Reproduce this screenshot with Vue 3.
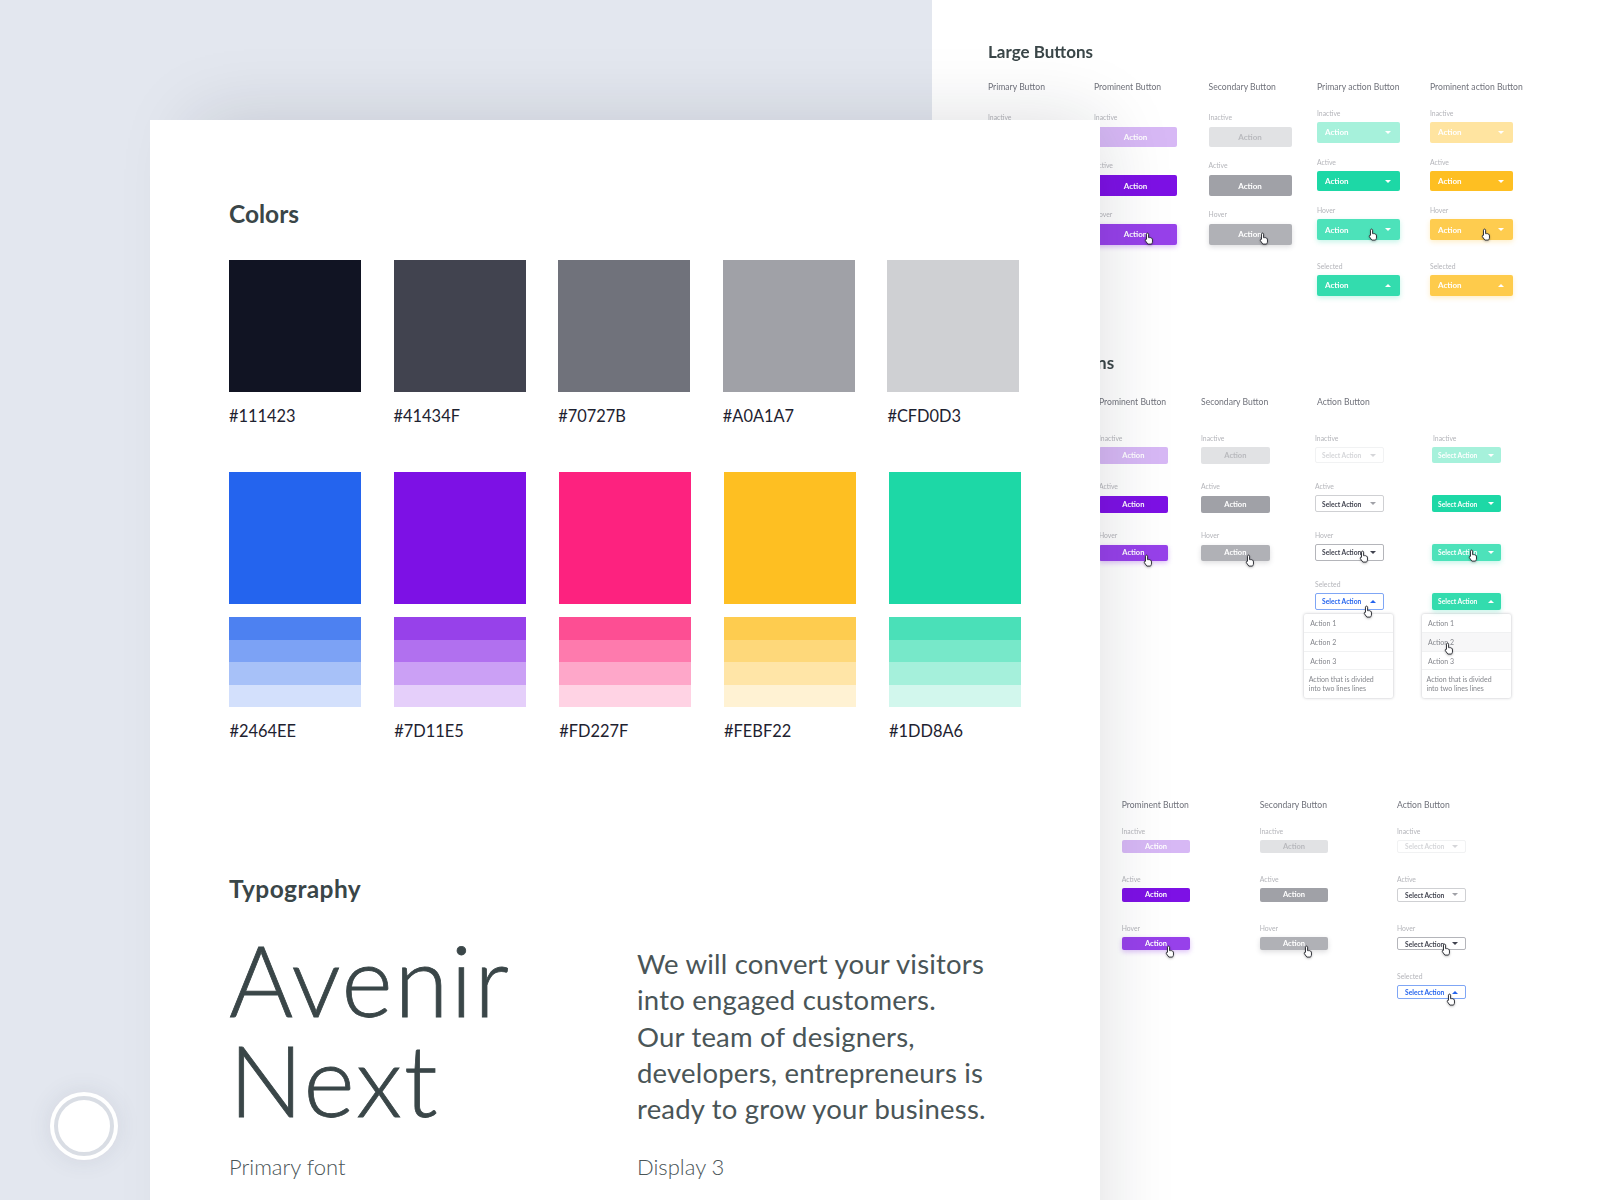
<script setup>
const greys = ['#111423', '#41434F', '#70727B', '#A0A1A7', '#CFD0D3']
const families = [
  { hex: '#2464EE', tints: ['#4D81F1', '#7CA2F5', '#A7C1F8', '#D3E0FC'] },
  { hex: '#7D11E5', tints: ['#9741EA', '#B170EF', '#CBA0F5', '#E5CFFA'] },
  { hex: '#FD227F', tints: ['#FD4E93', '#FE7AAD', '#FEA7C9', '#FFD3E4'] },
  { hex: '#FEBF22', tints: ['#FECC4F', '#FED87A', '#FFE5A7', '#FFF2D3'] },
  { hex: '#1DD8A6', tints: ['#4AE0B8', '#77E8C9', '#A5F0DB', '#D2F7ED'] }
]
const handPath = 'M4.2 1c.8 0 1.3.6 1.3 1.3v4.2c.5-.4 1.2-.3 1.5.2.5-.4 1.3-.2 1.5.4.6-.3 1.4.1 1.5.8l.2 2.6c.1 1.2-.2 2.2-.9 3.2l-.3.5H4.6l-2.9-4c-.4-.6-.3-1.3.2-1.7.4-.3 1-.3 1.1 0V2.3C3 1.6 3.5 1 4.2 1z'
const plain = (tone) => [
  { label: 'Inactive', cls: `${tone} inactive`, text: 'Action' },
  { label: 'Active', cls: `${tone} active`, text: 'Action' },
  { label: 'Hover', cls: `${tone} hover`, text: 'Action', hand: 'on-plain' }
]
const drop = (tone, text, labels = true) => [
  { label: 'Inactive', cls: `${tone} inactive`, text, arrow: 'down' },
  { label: labels ? 'Active' : '', cls: `${tone} active`, text, arrow: 'down' },
  { label: labels ? 'Hover' : '', cls: `${tone} hover`, text, arrow: 'down', hand: 'on-drop' },
  { label: labels ? 'Selected' : '', cls: `${tone} selected`, text, arrow: 'up', extra: true }
]
const menuItems = ['Action 1', 'Action 2', 'Action 3']
const sections = [
  {
    key: 'lg', title: 'Large Buttons',
    columns: [
      { head: 'Primary Button', states: [{ label: 'Inactive' }] },
      { head: 'Prominent Button', states: plain('purple') },
      { head: 'Secondary Button', states: plain('grey') },
      { head: 'Primary action Button', act: true, states: drop('green', 'Action') },
      { head: 'Prominent action Button', act: true, states: drop('yellow', 'Action') }
    ]
  },
  {
    key: 'md', title: 'Medium Buttons',
    columns: [
      { states: [] },
      { head: 'Prominent Button', states: plain('purple') },
      { head: 'Secondary Button', states: plain('grey') },
      { head: 'Action Button', act: true, menu: 'plain', states: drop('outline', 'Select Action') },
      { head: '', act: true, menu: 'hot', states: drop('green', 'Select Action', false) }
    ]
  },
  {
    key: 'sm', title: '',
    columns: [
      { states: [] },
      { head: 'Prominent Button', states: plain('purple') },
      { head: 'Secondary Button', states: plain('grey') },
      { head: 'Action Button', act: true, states: drop('outline', 'Select Action') }
    ]
  }
]
</script>

<template>
  <div class="canvas">
    <section class="sheet">
      <div v-for="s in sections" :key="s.key" class="group" :class="s.key">
        <h3 class="group-title">{{ s.title }}&nbsp;</h3>
        <div class="cols">
          <div v-for="(c, ci) in s.columns" :key="ci" class="col" :class="{ act: c.act }">
            <div class="col-head">{{ c.head }}&nbsp;</div>
            <div class="states">
              <div v-for="st in c.states" :key="st.label + st.cls" class="state" :class="{ extra: st.extra }">
                <div class="state-label">{{ st.label }}&nbsp;</div>
                <div v-if="st.cls" class="btn" :class="st.cls">
                  <span class="btn-text">{{ st.text }}</span>
                  <i v-if="st.arrow" class="arrow" :class="st.arrow"></i>
                  <svg v-if="st.hand || (st.extra && c.menu === 'plain') || (st.extra && s.key === 'sm')" class="hand" :class="st.hand || 'on-sel'" viewBox="0 0 12 15">
                    <path :d="handPath" fill="#fff" stroke="#23252c" stroke-width="1.1" stroke-linejoin="round" />
                  </svg>
                </div>
                <div v-if="st.extra && c.menu" class="menu" :class="c.menu">
                  <div v-for="(m, mi) in menuItems" :key="m" class="menu-row" :class="{ lit: c.menu === 'hot' && mi === 1 }">
                    {{ m }}
                    <svg v-if="c.menu === 'hot' && mi === 1" class="hand on-menu" viewBox="0 0 12 15">
                      <path :d="handPath" fill="#fff" stroke="#23252c" stroke-width="1.1" stroke-linejoin="round" />
                    </svg>
                  </div>
                  <div class="menu-row long">Action that is divided<br />into two lines lines</div>
                </div>
              </div>
            </div>
          </div>
        </div>
      </div>
    </section>

    <div class="card-shadow"></div>

    <main class="card">
      <h2 class="heading colors-heading">Colors</h2>
      <div class="swatches first">
        <div v-for="g in greys" :key="g" class="swatch">
          <div class="tile" :style="{ background: g }"></div>
          <div class="hex">{{ g }}</div>
        </div>
      </div>
      <div class="swatches second">
        <div v-for="f in families" :key="f.hex" class="swatch">
          <div class="tile" :style="{ background: f.hex }"></div>
          <div class="tints">
            <div v-for="t in f.tints" :key="t" class="tint" :style="{ background: t }"></div>
          </div>
          <div class="hex">{{ f.hex }}</div>
        </div>
      </div>

      <h2 class="heading type-heading">Typography</h2>
      <div class="type-grid">
        <div class="type-col">
          <div class="display">Avenir<br />Next</div>
          <div class="caption">Primary font</div>
        </div>
        <div class="type-col">
          <p class="copy">We will convert your visitors<br />into engaged customers.<br />Our team of designers,<br />developers, entrepreneurs is<br />ready to grow your business.</p>
          <div class="caption">Display 3</div>
        </div>
      </div>
    </main>

    <div class="record"><div class="record-inner"></div></div>
  </div>
</template>

<style>
html, body { margin: 0; background: #E3E7EF; }
</style>

<style scoped>
.canvas {
  position: relative;
  width: 1600px;
  height: 1200px;
  overflow: hidden;
  background: #E3E7EF;
  font-family: Lato, "Open Sans", sans-serif;
}

/* artboards on the free canvas */
.sheet {
  position: absolute;
  left: 932px;
  top: 0;
  width: 668px;
  height: 1200px;
  box-sizing: border-box;
  padding: 42px 0 0 56px;
  background: #fff;
  filter: blur(.35px);
}
.card-shadow {
  position: absolute;
  left: 195px;
  top: 120px;
  width: 905px;
  height: 1200px;
  box-shadow: 0 0 70px rgba(20, 25, 40, .15);
}
.card {
  position: absolute;
  left: 150px;
  top: 120px;
  width: 950px;
  height: 1080px;
  box-sizing: border-box;
  padding: 79px 0 0 79px;
  background: #fff;
  color: #3A4648;
}

/* left card */
.heading {
  margin: 0;
  font-size: 24.5px;
  line-height: 30px;
  font-weight: 700;
  letter-spacing: .4px;
  color: #3A4648;
}
.colors-heading { letter-spacing: 0; }
.swatches {
  display: grid;
  grid-template-columns: repeat(5, 132px);
}
.swatches.first { margin-top: 31px; column-gap: 32.6px; }
.swatches.second { margin-top: 44px; column-gap: 32.9px; margin-left: .4px; }
.tile { height: 132px; }
.tints { margin-top: 13px; display: flex; flex-direction: column; }
.tint { height: 22.5px; }
.hex {
  margin-top: 12px;
  font-size: 16.4px;
  line-height: 24px;
  color: #1E2230;
}
.type-heading { margin-top: 131px; }
.type-grid {
  display: grid;
  grid-template-columns: 408px 1fr;
  margin-top: 25px;
}
.display {
  font-size: 98px;
  line-height: 100px;
  font-weight: 300;
  letter-spacing: 2px;
  -webkit-text-stroke: .8px #3A4648;
  color: #3A4648;
}
.copy {
  margin: 17px 0 0;
  font-size: 27.5px;
  line-height: 36.3px;
  font-weight: 400;
  letter-spacing: .2px;
  color: #4A5557;
}
.caption {
  font-size: 22px;
  line-height: 28px;
  font-weight: 300;
  color: #4A5557;
}
.type-col:first-child .caption { margin-top: 24px; }
.type-col:last-child .caption { margin-top: 26px; }

/* record button */
.record {
  position: absolute;
  left: 50px;
  top: 1092px;
  width: 68px;
  height: 68px;
  box-sizing: border-box;
  padding: 4px;
  border-radius: 50%;
  background: #fff;
  box-shadow: 0 0 24px rgba(60, 70, 90, .1);
}
.record-inner {
  box-sizing: border-box;
  width: 100%;
  height: 100%;
  border: 4px solid #D9DDE4;
  border-radius: 50%;
  background: #fff;
}

/* right sheet */
.group-title {
  margin: 0;
  font-size: 17px;
  line-height: 20px;
  font-weight: 700;
  color: #3A4648;
  white-space: nowrap;
}
.cols { display: grid; }
.col-head {
  font-size: 8.6px;
  line-height: 12px;
  color: #70727B;
  white-space: nowrap;
}
.state { position: relative; }
.state-label {
  font-size: 6.8px;
  line-height: 10px;
  color: #B4B5BA;
  white-space: nowrap;
}
.btn {
  position: relative;
  display: flex;
  align-items: center;
  justify-content: center;
  box-sizing: border-box;
  border-radius: 2px;
  font-weight: 700;
  white-space: nowrap;
}
.extra .btn { z-index: 4; }
.act .btn { justify-content: flex-start; }
.arrow {
  position: absolute;
  top: 50%;
  width: 0;
  height: 0;
  margin-top: -1.5px;
  border-left: 3px solid transparent;
  border-right: 3px solid transparent;
}
.arrow.down { border-top: 3px solid currentColor; }
.arrow.up { border-bottom: 3px solid currentColor; }
.hand {
  position: absolute;
  width: 10px;
  height: 13px;
  z-index: 2;
  filter: drop-shadow(0 1px 1px rgba(0, 0, 0, .25));
}

.purple.inactive { background: #D7B8F5; color: #fff; }
.purple.active { background: #7D11E5; color: #fff; }
.purple.hover { background: #9741EA; color: #fff; box-shadow: 0 2px 5px rgba(125, 17, 229, .25); }
.grey.inactive { background: #E1E2E4; color: #B8B9BD; }
.grey.active { background: #A0A1A7; color: #fff; }
.grey.hover { background: #B0B1B6; color: #fff; box-shadow: 0 2px 5px rgba(90, 90, 100, .2); }
.green.inactive { background: #A6F1DB; color: #fff; }
.green.active { background: #1DD8A6; color: #fff; }
.green.hover { background: #4DE2BA; color: #fff; box-shadow: 0 2px 5px rgba(29, 216, 166, .25); }
.green.selected { background: #33DCAE; color: #fff; box-shadow: 0 2px 5px rgba(29, 216, 166, .25); }
.yellow.inactive { background: #FFE4A0; color: #fff; }
.yellow.active { background: #FEBF22; color: #fff; }
.yellow.hover { background: #FECC4F; color: #fff; box-shadow: 0 2px 5px rgba(254, 191, 34, .25); }
.yellow.selected { background: #FECB4B; color: #fff; box-shadow: 0 2px 5px rgba(254, 191, 34, .25); }
.outline { background: #fff; border: 1px solid #CFD0D3; color: #41434F; }
.outline.inactive { border-color: #F1F2F3; color: #D5D6D9; }
.outline.active .arrow { color: #A0A1A7; }
.outline.hover { border-color: #B4B5BA; }
.outline.selected { border-color: #7FA6F5; color: #2464EE; }

.menu {
  position: absolute;
  z-index: 3;
  width: 89.5px;
  background: #fff;
  border-radius: 2px;
  box-shadow: 0 0 3px rgba(30, 35, 50, .3);
  font-size: 7px;
  color: #85878D;
}
.menu-row {
  position: relative;
  box-sizing: border-box;
  height: 18.7px;
  padding-left: 6.5px;
  line-height: 18px;
  border-bottom: 1px solid #F0F1F2;
}
.menu-row.lit { background: #F7F7F8; }
.menu-row.long {
  height: 28px;
  padding: 5px 0 0 5px;
  line-height: 9px;
  border-bottom: 0;
}

/* large */
.lg .cols { grid-template-columns: 106px 114.6px 108.4px 113px 100px; }
.lg .col-head { margin-top: 19px; }
.lg .states { margin-top: 18.5px; display: flex; flex-direction: column; gap: 13px; }
.lg .act .states { margin-top: 15px; gap: 14px; }
.lg .state-label { margin-bottom: 5px; }
.lg .act .state-label { margin-bottom: 4px; }
.lg .btn { width: 83px; height: 20.7px; font-size: 8px; }
.lg .act .btn { padding-left: 8px; }
.lg .arrow { right: 9px; }
.lg .extra { margin-top: 7px; }
.lg .hand.on-plain { left: 50px; top: 8px; }
.lg .hand.on-drop { left: 51px; top: 9px; }

/* medium */
.md { margin-top: 57.5px; }
.md .cols { grid-template-columns: 111px 102px 114px 117px 100px; }
.md .col-head { margin-top: 22.5px; }
.md .act .col-head { margin-left: 2px; }
.md .states { margin-top: 25px; display: flex; flex-direction: column; gap: 17.5px; }
.md .act .states { gap: 18px; }
.md .state-label { margin-bottom: 4.5px; }
.md .act .state-label { margin-bottom: 4px; }
.md .btn { width: 68.7px; height: 16.7px; font-size: 7.5px; }
.md .act .btn { padding-left: 6px; font-size: 6.7px; }
.md .arrow { right: 7px; }
.md .hand.on-plain { left: 44px; top: 9px; }
.md .hand.on-drop { left: 43px; top: 5px; }
.md .green .hand.on-drop { left: 36px; }
.md .hand.on-sel { left: 47px; top: 11px; }
.md .hand.on-menu { left: 22px; top: 9px; }
.md .menu { top: 35.5px; left: -11.3px; }
.md .act:last-child .state-label { margin-left: 1px; }
.md .act:last-child .menu { left: -10.5px; }

/* small */
.sm { margin-top: 169px; }
.sm .cols { grid-template-columns: 133.7px 138px 137.3px 100px; }
.sm .col-head { margin-top: 0; }
.sm .states { margin-top: 15px; display: flex; flex-direction: column; gap: 20.9px; }
.sm .state-label { margin-bottom: 4px; }
.sm .btn { width: 68.7px; height: 13.7px; font-size: 7.5px; }
.sm .act .btn { padding-left: 7px; font-size: 6.7px; }
.sm .arrow { right: 7px; }
.sm .hand.on-plain { left: 43px; top: 8px; }
.sm .hand.on-drop { left: 43px; top: 5px; }
.sm .hand.on-sel { left: 48px; top: 7px; }
</style>
